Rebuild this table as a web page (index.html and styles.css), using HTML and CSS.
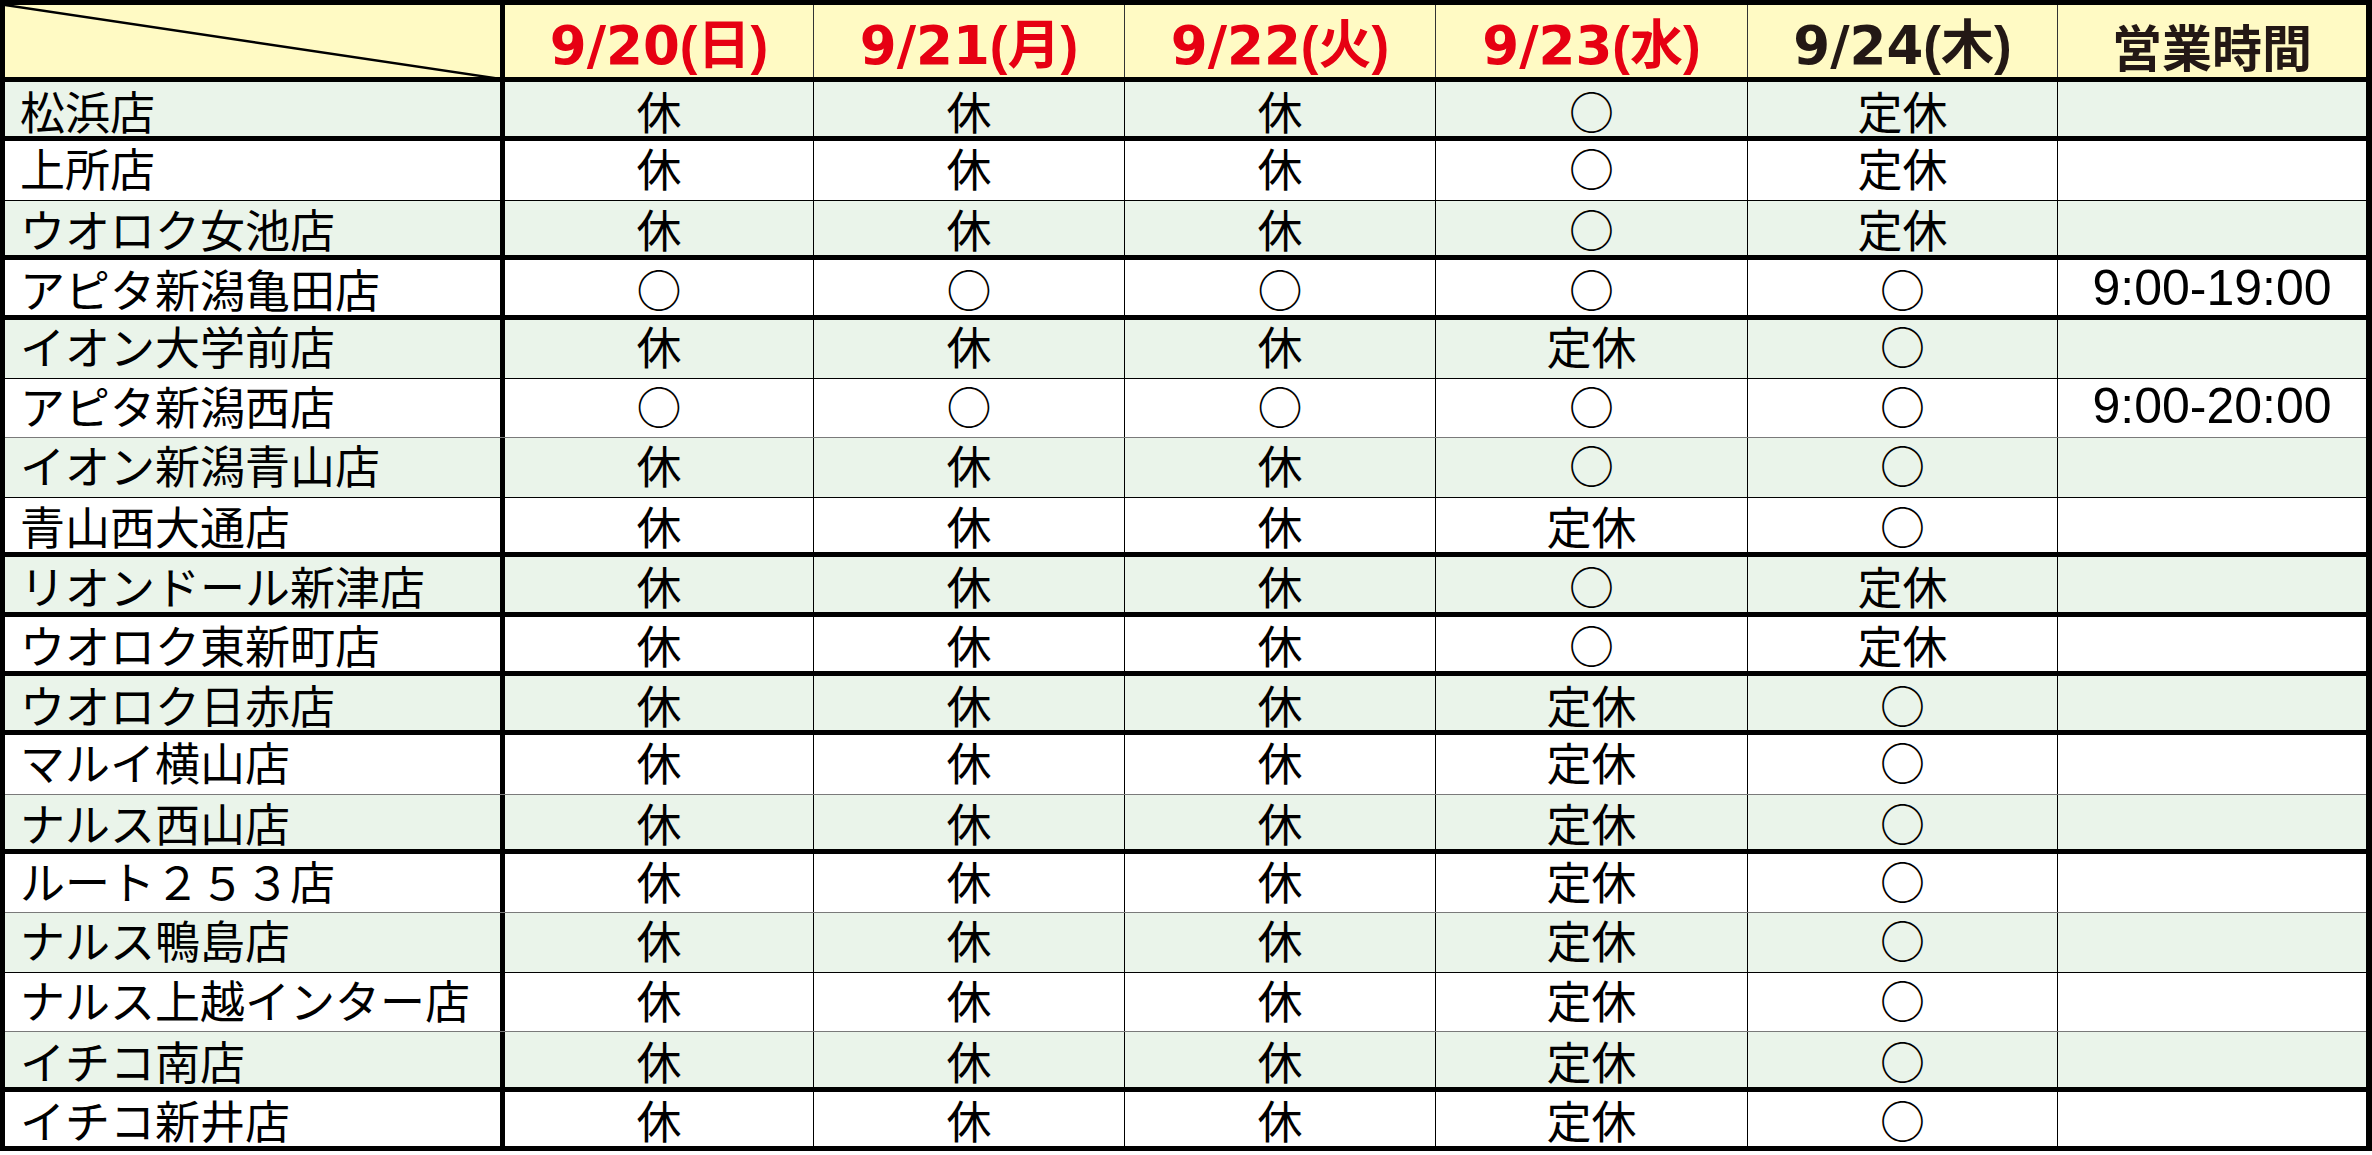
FILE: index.html
```html
<!DOCTYPE html>
<html lang="ja">
<head>
<meta charset="utf-8">
<title>営業日一覧</title>
<link rel="stylesheet" href="styles.css">
</head>
<body>
<div class="sheet">
  <div class="row head">
    <div class="cell corner"><svg class="diag" viewBox="0 0 495 77" preserveAspectRatio="none"><line x1="0" y1="0" x2="495" y2="79" stroke="#000" stroke-width="2.6"/></svg></div>
    <div class="cell date red">9/20<span class="p">(日)</span></div>
    <div class="cell date red">9/21<span class="p">(月)</span></div>
    <div class="cell date red">9/22<span class="p">(火)</span></div>
    <div class="cell date red">9/23<span class="p">(水)</span></div>
    <div class="cell date dark">9/24<span class="p">(木)</span></div>
    <div class="cell hhead">営業時間</div>
  </div>

  <div class="row g thick"><div class="cell name">松浜店</div><div class="cell">休</div><div class="cell">休</div><div class="cell">休</div><div class="cell">○</div><div class="cell">定休</div><div class="cell hours"></div></div>
  <div class="row"><div class="cell name">上所店</div><div class="cell">休</div><div class="cell">休</div><div class="cell">休</div><div class="cell">○</div><div class="cell">定休</div><div class="cell hours"></div></div>
  <div class="row g thick"><div class="cell name">ウオロク女池店</div><div class="cell">休</div><div class="cell">休</div><div class="cell">休</div><div class="cell">○</div><div class="cell">定休</div><div class="cell hours"></div></div>
  <div class="row thick"><div class="cell name">アピタ新潟亀田店</div><div class="cell">○</div><div class="cell">○</div><div class="cell">○</div><div class="cell">○</div><div class="cell">○</div><div class="cell hours">9:00-19:00</div></div>
  <div class="row g"><div class="cell name">イオン大学前店</div><div class="cell">休</div><div class="cell">休</div><div class="cell">休</div><div class="cell">定休</div><div class="cell">○</div><div class="cell hours"></div></div>
  <div class="row gray"><div class="cell name">アピタ新潟西店</div><div class="cell">○</div><div class="cell">○</div><div class="cell">○</div><div class="cell">○</div><div class="cell">○</div><div class="cell hours">9:00-20:00</div></div>
  <div class="row g"><div class="cell name">イオン新潟青山店</div><div class="cell">休</div><div class="cell">休</div><div class="cell">休</div><div class="cell">○</div><div class="cell">○</div><div class="cell hours"></div></div>
  <div class="row thick"><div class="cell name">青山西大通店</div><div class="cell">休</div><div class="cell">休</div><div class="cell">休</div><div class="cell">定休</div><div class="cell">○</div><div class="cell hours"></div></div>
  <div class="row g thick"><div class="cell name">リオンドール新津店</div><div class="cell">休</div><div class="cell">休</div><div class="cell">休</div><div class="cell">○</div><div class="cell">定休</div><div class="cell hours"></div></div>
  <div class="row thick"><div class="cell name">ウオロク東新町店</div><div class="cell">休</div><div class="cell">休</div><div class="cell">休</div><div class="cell">○</div><div class="cell">定休</div><div class="cell hours"></div></div>
  <div class="row g thick"><div class="cell name">ウオロク日赤店</div><div class="cell">休</div><div class="cell">休</div><div class="cell">休</div><div class="cell">定休</div><div class="cell">○</div><div class="cell hours"></div></div>
  <div class="row gray"><div class="cell name">マルイ横山店</div><div class="cell">休</div><div class="cell">休</div><div class="cell">休</div><div class="cell">定休</div><div class="cell">○</div><div class="cell hours"></div></div>
  <div class="row g thick"><div class="cell name">ナルス西山店</div><div class="cell">休</div><div class="cell">休</div><div class="cell">休</div><div class="cell">定休</div><div class="cell">○</div><div class="cell hours"></div></div>
  <div class="row gray"><div class="cell name">ルート２５３店</div><div class="cell">休</div><div class="cell">休</div><div class="cell">休</div><div class="cell">定休</div><div class="cell">○</div><div class="cell hours"></div></div>
  <div class="row g"><div class="cell name">ナルス鴨島店</div><div class="cell">休</div><div class="cell">休</div><div class="cell">休</div><div class="cell">定休</div><div class="cell">○</div><div class="cell hours"></div></div>
  <div class="row gray"><div class="cell name">ナルス上越インター店</div><div class="cell">休</div><div class="cell">休</div><div class="cell">休</div><div class="cell">定休</div><div class="cell">○</div><div class="cell hours"></div></div>
  <div class="row g thick"><div class="cell name">イチコ南店</div><div class="cell">休</div><div class="cell">休</div><div class="cell">休</div><div class="cell">定休</div><div class="cell">○</div><div class="cell hours"></div></div>
  <div class="row thick"><div class="cell name">イチコ新井店</div><div class="cell">休</div><div class="cell">休</div><div class="cell">休</div><div class="cell">定休</div><div class="cell">○</div><div class="cell hours"></div></div>
</div>
</body>
</html>
```

FILE: styles.css
```css
html, body {
  margin: 0;
  padding: 0;
  background: #ffffff;
}

.sheet {
  width: 2372px;
  box-sizing: border-box;
  border-style: solid;
  border-color: #000;
  border-width: 5px 6px 0 5px;
  font-family: "Noto Sans CJK JP", sans-serif;
  color: #000;
}

.row {
  display: grid;
  grid-template-columns: 500px 308px 311px 311px 312px 310px 309px;
  height: 59.4px;
  box-sizing: border-box;
  border-bottom: 1px solid #000;
  background: #ffffff;
}

.row.g { background: #eaf4ea; }
.row.thick { border-bottom: 5px solid #000; }
.row.gray { border-bottom-color: #7a7a7a; }

.cell {
  display: flex;
  align-items: center;
  justify-content: center;
  box-sizing: border-box;
  border-left: 1px solid #000;
  font-size: 45px;
  line-height: 1;
  padding-bottom: 6px;
  white-space: nowrap;
}

.row.thick .cell {
  padding-bottom: 0;
  padding-top: 2px;
}

.row > .cell:nth-child(2) { border-left: 0; }

.cell.name {
  justify-content: flex-start;
  border-left: 0;
  border-right: 5px solid #000;
  padding-left: 15px;
}

.cell.hours {
  font-family: "Liberation Sans", Arial, sans-serif;
  font-size: 50px;
}

.row:not(.thick) .cell.hours { padding-bottom: 4px; }

/* header */
.row.head {
  height: 77px;
  border-bottom: 5px solid #000;
  background: #fffac4;
}

.head .cell {
  padding: 8px 0 0 0;
  border-left-color: #333;
}

.head .cell.corner {
  padding: 0;
  align-items: stretch;
  border-left: 0;
  border-right: 5px solid #000;
  overflow: hidden;
}

.diag {
  display: block;
  width: 100%;
  height: 100%;
  overflow: visible;
}

.cell.date {
  font-family: "DejaVu Sans", "Noto Sans CJK JP", sans-serif;
  font-weight: bold;
  font-size: 53px;
}

.cell.date .p {
  font-family: "Liberation Sans", "Noto Sans CJK JP", sans-serif;
  font-weight: bold;
  font-size: 53px;
}

.red { color: #e60012; }
.dark { color: #231815; }

.cell.hhead {
  font-family: "Noto Sans CJK JP", sans-serif;
  font-weight: bold;
  font-size: 50px;
  color: #231815;
}
```
